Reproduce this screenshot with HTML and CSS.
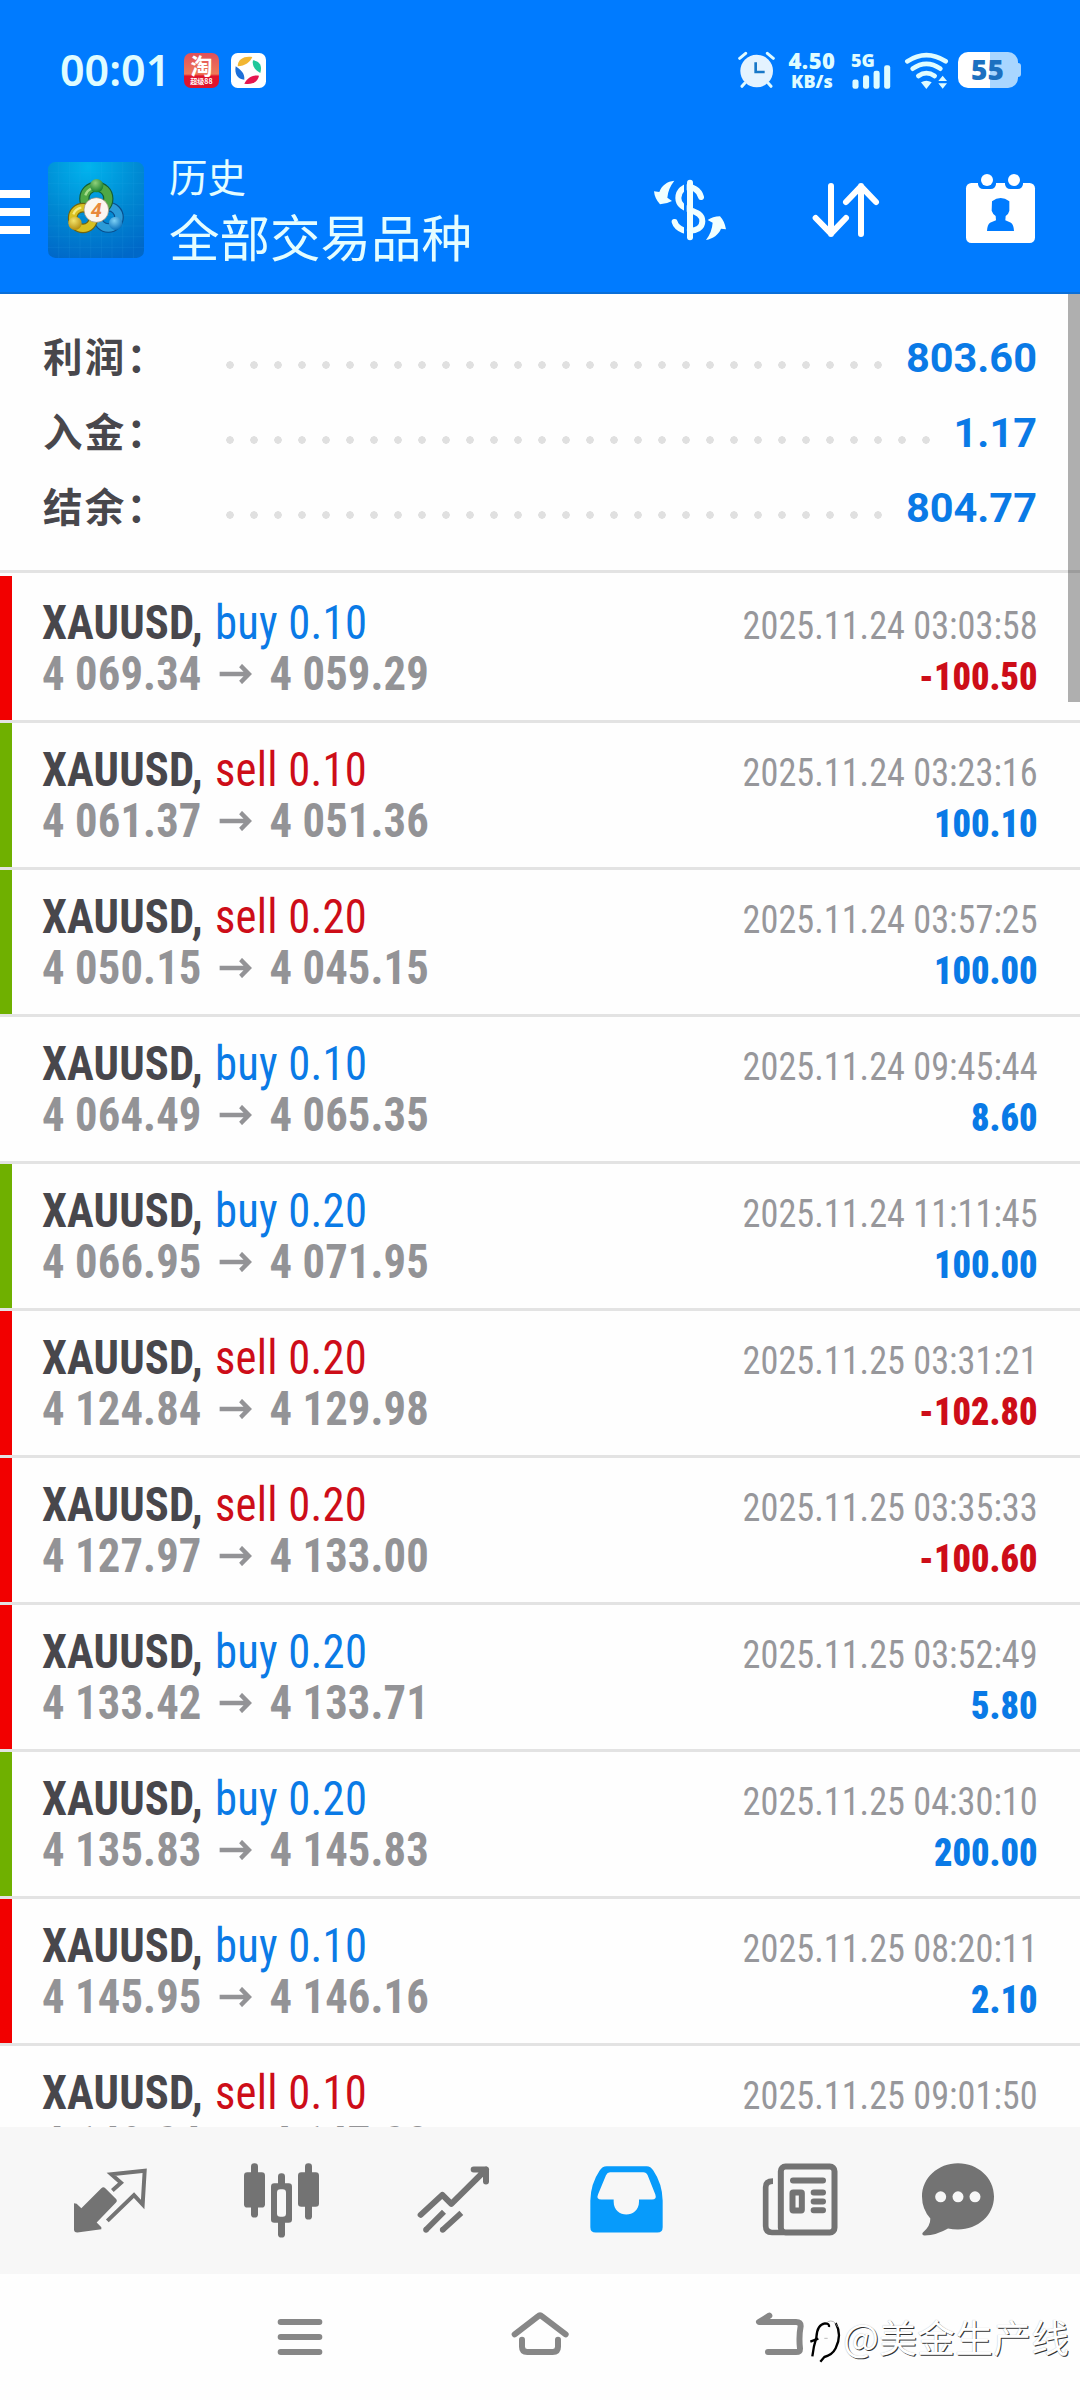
FILE: index.html
```
<!DOCTYPE html>
<html lang="zh-CN">
<head>
<meta charset="utf-8">
<title>历史</title>
<link rel="stylesheet" href="styles.css">
</head>
<body>
<div class="screen">
  <header class="top">
    <div class="status">
      <span class="clock">00:01</span>
      <span class="app-chip">
        <span class="chip-main">淘</span>
        <span class="chip-sub">超级88</span>
      </span>
      <svg class="chip" viewBox="0 0 105 105">
        <rect width="105" height="105" rx="20" fill="#fff"/>
        <path d="M20 40C20 18 40 8 64 12C58 26 42 40 20 40Z" fill="#f2b632"/>
        <path d="M66 22C86 24 94 38 88 60C74 52 62 40 66 22Z" fill="#1fc79a"/>
        <path d="M84 68C80 88 62 96 40 92C48 76 62 64 84 68Z" fill="#e5174f"/>
        <path d="M14 40C28 50 42 60 40 80C20 80 10 62 14 40Z" fill="#1d6fd8"/>
      </svg>
      <span class="spacer"></span>
      <svg class="alarm" viewBox="54 66 111 114" width="37" height="38">
        <g stroke="#dffaff" stroke-width="9" stroke-linecap="round" fill="none">
          <path d="M59 88L77 73M160 88L142 73M74 163L66 172M145 163L153 172"/>
        </g>
        <circle cx="110" cy="126" r="49" fill="#e4f3ff"/>
        <path d="M107 100V129H134" fill="none" stroke="#1878c8" stroke-width="8"/>
      </svg>
      <span class="speed"><b>4.50</b><b class="unit">KB/s</b></span>
      <span class="signal">
        <b>5G</b>
        <svg viewBox="397 106 123 75" width="41" height="25">
          <g fill="#dffcff"><rect x="399" y="151" width="19" height="29" rx="7"/><rect x="432" y="138" width="19" height="42" rx="7"/><rect x="465" y="124" width="19" height="56" rx="7"/><rect x="498" y="107" width="19" height="73" rx="7"/></g>
        </svg>
      </span>
      <svg class="wifi" viewBox="549 66 135 117" width="45" height="39">
        <g fill="none" stroke="#dffcff" stroke-width="14" stroke-linecap="round">
          <path d="M559 97Q616 60 674 97"/><path d="M575 119Q616 90 658 119"/><path d="M592 141Q616 124 641 141"/>
        </g>
        <path d="M600 160Q616 151 632 160L616 180Z" fill="#dffcff"/>
        <path d="M652 156L665 140L678 156ZM652 163L665 179L678 163Z" fill="#dffcff"/>
      </svg>
      <span class="battery"><b>55</b></span>
    </div>
    <div class="bar">
      <span class="menu"><i></i><i></i><i></i></span>
      <svg class="logo" viewBox="144 396 288 288">
        <defs>
          <radialGradient id="lg" cx="42%" cy="5%" r="100%"><stop offset="0" stop-color="#00b4ee"/><stop offset=".55" stop-color="#0088d2"/><stop offset="1" stop-color="#0068c8"/></radialGradient>
          <radialGradient id="gn" cx="40%" cy="30%" r="70%"><stop offset="0" stop-color="#8fd07a"/><stop offset="1" stop-color="#187f2e"/></radialGradient>
          <radialGradient id="yl" cx="40%" cy="30%" r="70%"><stop offset="0" stop-color="#f3e36a"/><stop offset="1" stop-color="#b68f10"/></radialGradient>
          <radialGradient id="bl" cx="40%" cy="30%" r="70%"><stop offset="0" stop-color="#7dd0f5"/><stop offset="1" stop-color="#0b72bd"/></radialGradient>
        </defs>
        <rect x="144" y="396" width="288" height="288" rx="22" fill="url(#lg)"/>
        <path d="M176 396V684M208 396V684M240 396V684M272 396V684M304 396V684M336 396V684M368 396V684M400 396V684M144 428H432M144 460H432M144 492H432M144 524H432M144 556H432M144 588H432M144 620H432M144 652H432" stroke="#3fb4ee" stroke-opacity=".18" stroke-width="2"/>
        <circle cx="325" cy="562" r="32" fill="none" stroke="#0a4f8d" stroke-width="29"/>
        <circle cx="325" cy="562" r="32" fill="none" stroke="#2b9bd8" stroke-width="22"/>
        <circle cx="289" cy="506" r="36" fill="none" stroke="#155f35" stroke-width="31"/>
        <circle cx="289" cy="506" r="36" fill="none" stroke="#4fa845" stroke-width="24"/>
        <path d="M256 496A36 36 0 0 1 300 473" fill="none" stroke="#a6dc8a" stroke-width="7"/>
        <circle cx="249" cy="564" r="31" fill="none" stroke="#6f6410" stroke-width="29"/>
        <circle cx="249" cy="564" r="31" fill="none" stroke="#d8c022" stroke-width="22"/>
        <path d="M220 553A31 31 0 0 1 244 533" fill="none" stroke="#f5ec80" stroke-width="7"/>
        <circle cx="290" cy="467" r="20" fill="url(#gn)"/>
        <circle cx="225" cy="580" r="20" fill="url(#yl)"/>
        <circle cx="347" cy="580" r="20" fill="url(#bl)"/>
        <circle cx="289" cy="540" r="37" fill="#fbf6f0" stroke="#9a8a70" stroke-width="2"/>
        <text class="logo-num" x="289" y="562" text-anchor="middle">4</text>
      </svg>
      <div class="titles"><span class="small">历史</span><span class="large">全部交易品种</span></div>
      <svg class="action" viewBox="15 45 270 270">
        <g fill="#f0ffff"><path d="M103 92C82 94 65 106 58 126L42 124Q44 146 60 163Q80 162 96 153L82 143Q84 116 103 92Z"/>
        <path d="M198 270C219 266 236 254 243 236L258 238Q254 214 240 199Q218 200 203 210L218 218Q216 246 198 270Z"/></g>
        <path d="M183 141C176 116 154 112 150 112C132 108 115 122 115 144C115 166 134 174 150 180C172 188 187 194 187 214C187 234 168 242 150 242M104 216C108 230 118 236 130 241" fill="none" stroke="#f0ffff" stroke-width="18" stroke-linecap="round"/>
        <path d="M136 98V262" stroke="#007bff" stroke-width="8"/>
        <path d="M150 98V262" stroke="#f0ffff" stroke-width="18" stroke-linecap="round"/>
      </svg>
      <svg class="action" viewBox="243 405 270 270">
        <g fill="none" stroke="#fff" stroke-width="18" stroke-linecap="round" stroke-linejoin="round"><path d="M333 468V612M287 564L333 611L378 564"/><path d="M423 612V468M378 516L423 469L468 516"/></g>
      </svg>
      <svg class="action" viewBox="711 405 270 270">
        <rect x="738" y="459" width="207" height="180" rx="16" fill="#fff"/>
        <path d="M774 455V463Q776 477 790 477H812Q826 477 828 463V455ZM855 455V463Q857 477 871 477H893Q907 477 909 463V455Z" fill="#007bff"/>
        <circle cx="801" cy="450" r="18" fill="#fff"/><circle cx="882" cy="450" r="18" fill="#fff"/>
        <path d="M816 514Q842 494 868 514V542Q866 552 857 558L856 571L873 578Q881 583 882 603H801Q802 583 810 578L828 571L827 558Q818 552 815 542Z" fill="#007bff"/>
      </svg>
    </div>
  </header>

  <main class="list">
    <section class="summary">
      <div class="sum"><span>利润：</span><i></i><b>803.60</b></div>
      <div class="sum"><span>入金：</span><i></i><b>1.17</b></div>
      <div class="sum"><span>结余：</span><i></i><b>804.77</b></div>
    </section>

    <article class="deal loss"><div class="line"><span class="sym">XAUUSD,</span><span class="buy">buy 0.10</span><time>2025.11.24 03:03:58</time></div><div class="line price"><span>4 069.34</span><svg class="arrow" viewBox="0 0 35 20"><use href="#arr"/></svg><span>4 059.29</span><b class="neg">-100.50</b></div></article>
    <article class="deal gain"><div class="line"><span class="sym">XAUUSD,</span><span class="sell">sell 0.10</span><time>2025.11.24 03:23:16</time></div><div class="line price"><span>4 061.37</span><svg class="arrow" viewBox="0 0 35 20"><use href="#arr"/></svg><span>4 051.36</span><b class="pos">100.10</b></div></article>
    <article class="deal gain"><div class="line"><span class="sym">XAUUSD,</span><span class="sell">sell 0.20</span><time>2025.11.24 03:57:25</time></div><div class="line price"><span>4 050.15</span><svg class="arrow" viewBox="0 0 35 20"><use href="#arr"/></svg><span>4 045.15</span><b class="pos">100.00</b></div></article>
    <article class="deal"><div class="line"><span class="sym">XAUUSD,</span><span class="buy">buy 0.10</span><time>2025.11.24 09:45:44</time></div><div class="line price"><span>4 064.49</span><svg class="arrow" viewBox="0 0 35 20"><use href="#arr"/></svg><span>4 065.35</span><b class="pos">8.60</b></div></article>
    <article class="deal gain"><div class="line"><span class="sym">XAUUSD,</span><span class="buy">buy 0.20</span><time>2025.11.24 11:11:45</time></div><div class="line price"><span>4 066.95</span><svg class="arrow" viewBox="0 0 35 20"><use href="#arr"/></svg><span>4 071.95</span><b class="pos">100.00</b></div></article>
    <article class="deal loss"><div class="line"><span class="sym">XAUUSD,</span><span class="sell">sell 0.20</span><time>2025.11.25 03:31:21</time></div><div class="line price"><span>4 124.84</span><svg class="arrow" viewBox="0 0 35 20"><use href="#arr"/></svg><span>4 129.98</span><b class="neg">-102.80</b></div></article>
    <article class="deal loss"><div class="line"><span class="sym">XAUUSD,</span><span class="sell">sell 0.20</span><time>2025.11.25 03:35:33</time></div><div class="line price"><span>4 127.97</span><svg class="arrow" viewBox="0 0 35 20"><use href="#arr"/></svg><span>4 133.00</span><b class="neg">-100.60</b></div></article>
    <article class="deal loss"><div class="line"><span class="sym">XAUUSD,</span><span class="buy">buy 0.20</span><time>2025.11.25 03:52:49</time></div><div class="line price"><span>4 133.42</span><svg class="arrow" viewBox="0 0 35 20"><use href="#arr"/></svg><span>4 133.71</span><b class="pos">5.80</b></div></article>
    <article class="deal gain"><div class="line"><span class="sym">XAUUSD,</span><span class="buy">buy 0.20</span><time>2025.11.25 04:30:10</time></div><div class="line price"><span>4 135.83</span><svg class="arrow" viewBox="0 0 35 20"><use href="#arr"/></svg><span>4 145.83</span><b class="pos">200.00</b></div></article>
    <article class="deal loss"><div class="line"><span class="sym">XAUUSD,</span><span class="buy">buy 0.10</span><time>2025.11.25 08:20:11</time></div><div class="line price"><span>4 145.95</span><svg class="arrow" viewBox="0 0 35 20"><use href="#arr"/></svg><span>4 146.16</span><b class="pos">2.10</b></div></article>
    <article class="deal"><div class="line"><span class="sym">XAUUSD,</span><span class="sell">sell 0.10</span><time>2025.11.25 09:01:50</time></div><div class="line price"><span>4 149.24</span><svg class="arrow" viewBox="0 0 35 20"><use href="#arr"/></svg><span>4 147.28</span></div></article>
    <span class="scrollbar"></span>
  </main>

  <nav class="tabs">
    <svg viewBox="204 355.5 252 252">
      <path d="M304 443Q310 438 316 443L349 476Q353 481 348 486L290 546L304 560V566L232 576Q222 576 222 567V488L230 490L244 503Z" fill="#737373"/>
      <path d="M337 450L363 427L334 401L434 391L428 492L402 464L322 541" fill="none" stroke="#737373" stroke-width="12"/>
    </svg>
    <svg viewBox="720 355.5 252 252">
      <g fill="#737373"><rect x="732" y="395" width="63" height="106" rx="10"/><rect x="753" y="368" width="21" height="163" rx="10"/><rect x="894" y="395" width="63" height="104" rx="10"/><rect x="915" y="368" width="21" height="169" rx="10"/><rect x="813" y="428" width="63" height="119" rx="10"/><rect x="834" y="398" width="21" height="193" rx="10"/></g>
      <rect x="831" y="446" width="27" height="83" rx="10" fill="#f7f7f7"/>
    </svg>
    <svg viewBox="96 355.5 252 252">
      <g fill="none" stroke="#737373" stroke-width="18" stroke-linecap="round" stroke-linejoin="round"><path d="M122 523L187 463L214 490L318 387M281 387H318V423"/></g>
      <path d="M138 568L192 514M188 568L244 517" stroke="#737373" stroke-width="17"/>
      <circle cx="138" cy="568" r="8.500" fill="#737373"/><circle cx="188" cy="568" r="8.500" fill="#737373"/>
    </svg>
    <svg viewBox="612 355.5 252 252">
      <path fill-rule="evenodd" fill="#079bfb" d="M680 377H800Q812 377 820 390Q847 430 848 480V560Q848 576 832 576H647Q631 576 631 560V480Q632 430 659 390Q667 377 680 377ZM690 395Q682 395 678 404L654 462Q648 477 664 477H701V484C701 535 777 535 777 484V477H816Q831 477 826 462L803 404Q799 395 790 395Z"/>
    </svg>
    <svg viewBox="168 355.5 252 252">
      <g fill="none" stroke="#737373"><rect x="242.500" y="378" width="161" height="198" rx="14" stroke-width="18"/><path d="M219 422Q197 422 197 440V556Q197 576 216 576H250" stroke-width="17"/><path d="M279 420H369M341 456H369M341 483H369M341 509H369" stroke-width="18" stroke-linecap="round"/><rect x="277.500" y="456" width="28" height="54" rx="2" stroke-width="18" stroke-linejoin="round"/></g>
    </svg>
    <svg viewBox="684 355.5 252 252">
      <path d="M774 368C834 368 882 412 882 468C882 524 834 567 774 567Q758 567 744 564Q710 584 674 585Q664 584 668 577Q692 556 691 534Q666 506 666 468C666 412 714 368 774 368Z" fill="#737373"/>
      <g fill="#f7f7f7"><circle cx="722" cy="469" r="16.500"/><circle cx="774" cy="469" r="16.500"/><circle cx="825" cy="469" r="16.500"/></g>
    </svg>
  </nav>

  <nav class="system">
    <svg viewBox="810 801 180 180"><path d="M842 846H958M842 891H958M842 936H958" stroke="#878787" stroke-width="18" stroke-linecap="round"/></svg>
    <svg viewBox="390 801 180 180"><g fill="none" stroke="#878787" stroke-width="18" stroke-linecap="round" stroke-linejoin="round"><path d="M404 883L474 829Q480 823 486 829L557 883"/><path d="M426 899V920Q426 936 442 936H518Q534 936 534 920V899"/></g></svg>
    <svg viewBox="150 801 180 180"><g fill="none" stroke="#878787" stroke-width="18" stroke-linecap="round" stroke-linejoin="round"><path d="M208 827L177 846H288Q302 846 302 858Q296 890 300 926Q300 936 288 936H204"/></g></svg>
    <div class="mark">
      <svg viewBox="325 840 105 135"><path d="M332 908L356 899" fill="none" stroke="#000" stroke-width="7"/><path d="M338 952Q342 920 350 896Q352 856 376 853Q390 853 388 864" fill="none" stroke="#000" stroke-width="7"/><path d="M408 852Q428 888 408 928Q398 948 374 954L362 968" fill="none" stroke="#000" stroke-width="7"/><path d="M384 848Q404 840 414 864M374 898H384" fill="none" stroke="#999" stroke-width="2"/></svg>
      <span>@美金生产线</span>
    </div>
  </nav>
</div>
<svg class="defs" width="0" height="0"><defs><path id="arr" d="M0 10H31M22.500 1.500L31.500 10L22.500 18.500" fill="none" stroke="#939396" stroke-width="4.500"/></defs></svg>
</body>
</html>
```
FILE: styles.css
```
* { box-sizing: border-box; }
body { margin: 0; background: #fefefe; font-family: Roboto, "Noto Sans CJK SC", sans-serif; }
.screen { width: 1080px; height: 2400px; display: flex; flex-direction: column; overflow: hidden; position: relative; }
.defs { position: absolute; }

.top { height: 294px; flex: none; background: #007bff; border-bottom: 2px solid #0a6fd8; }
.status { height: 142px; padding: 0 62px 2px 60px; display: flex; align-items: center; }
.clock { font: 600 43px/48px "Noto Sans", sans-serif; color: #dffcff; width: 124px; letter-spacing: 0; white-space: nowrap; }
.app-chip { width: 35px; height: 35px; border-radius: 7px; margin-right: 12px; background: linear-gradient(#e0505a, #ef7a58 60%, #e0142c 66%); color: #fff; display: flex; flex-direction: column; align-items: center; overflow: hidden; }
.chip-main { font: 700 22px/23px "Noto Sans CJK SC", sans-serif; }
.chip-sub { font: 700 7px/11px "Noto Sans CJK SC", sans-serif; }
.chip { width: 35px; height: 35px; }
.spacer { flex: 1; }
.alarm { margin-right: 13px; }
.speed { width: 48px; display: flex; flex-direction: column; align-items: center; color: #dffcff; margin-right: 15px; font: 700 22px/22px "Noto Sans", sans-serif; letter-spacing: 0.500px; }
.speed .unit { font-size: 18px; line-height: 20px; letter-spacing: 0; }
.signal { width: 42px; height: 38px; display: flex; flex-direction: column; color: #dffcff; margin-right: 11px; font: 700 18px/18px "Noto Sans", sans-serif; }
.signal svg { margin-top: -4px; }
.signal b { height: 18px; }
.wifi { margin-right: 9px; }
.battery { width: 60px; height: 36px; border-radius: 10px; background: linear-gradient(90deg, #fff 32px, #a9d6ff 32px); color: #1c70c0; font: 700 28px/35px "Noto Sans", sans-serif; padding-left: 13px; position: relative; }
.battery::after { content: ""; position: absolute; right: -3px; top: 11px; width: 4px; height: 14px; border-radius: 0 3px 3px 0; background: #a9d6ff; }

.bar { height: 136px; padding-right: 33px; display: flex; align-items: center; }
.menu { width: 30px; margin-top: 4px; display: flex; flex-direction: column; gap: 10px; }
.menu i { height: 8px; background: #fff; }
.logo { width: 96px; height: 96px; margin: 0 25px 0 18px; }
.logo-num { font: italic 700 60px Roboto, sans-serif; fill: #e8893c; }
.titles { flex: 1; display: flex; flex-direction: column; color: #e4fdff; font-family: "Noto Sans CJK SC", sans-serif; margin-top: -9px; }
.titles .small { font-size: 38.500px; line-height: 58px; }
.titles .large { font-size: 50.500px; line-height: 62px; }
.action { width: 90px; height: 90px; margin-left: 66px; }

.list { flex: none; height: 1833px; overflow: hidden; position: relative; }
.summary { height: 279px; padding: 24px 43px 0; border-bottom: 3px solid #e3e3e3; margin-bottom: 3px; }
.sum { height: 75px; display: flex; align-items: center; font-size: 42px; }
.sum span { width: 175px; font: 700 39.500px/72px "Noto Sans CJK SC", sans-serif; letter-spacing: 2.200px; color: #48474c; white-space: nowrap; margin-top: -2px; }
.sum i { flex: 1; height: 8px; margin: 18px 17px 0 0; background: radial-gradient(circle, #e0e0e0 3.500px, transparent 4px) 0 0 / 24px 8px; }
.sum b { color: #0a7ae6; line-height: 75px; font-size: 41.500px; padding-top: 3px; }

.deal { height: 147px; border-bottom: 3px solid #e3e3e3; padding: 21px 43px 0 42px; }
.loss { background: linear-gradient(#f20000, #f20000) 0 0 / 12px 144px no-repeat; }
.gain { background: linear-gradient(#6fb000, #6fb000) 0 0 / 12px 144px no-repeat; }
/* Narrow the condensed face a little further, across the full row width. */
.line { width: 107.600%; transform: scaleX(0.930); transform-origin: 0 0; height: 51px; display: flex; align-items: baseline; font: 400 48px/51px "Roboto Condensed", Roboto, sans-serif; white-space: nowrap; }
.sym { font-weight: 700; color: #48474c; width: 186px; letter-spacing: 0.150px; }
.buy, .sell { letter-spacing: 0.250px; }
.buy { color: #0a7ae6; }
.sell { color: #cd0d18; }
.line time, .line b { margin-left: auto; font-size: 39px; }
.line time { color: #97979b; }
.price { font-weight: 700; color: #939396; }
.price span { letter-spacing: 0.120px; }
.arrow { width: 37px; height: 20px; margin: 0 18px 0 18px; position: relative; top: -6px; }
.pos { color: #0a7ae6; }
.neg { color: #cd0d18; }
.scrollbar { position: absolute; right: 0; top: 0; width: 12px; height: 408px; background: rgba(0, 0, 0, 0.310); }

.tabs { height: 147px; flex: none; background: #f7f7f7; padding: 0 24px; display: grid; grid-template-columns: repeat(6, 172px); place-items: center; }
.tabs svg { width: 84px; height: 84px; overflow: visible; }
.system { flex: 1; padding: 0 180px; display: grid; grid-template-columns: repeat(3, 240px); place-items: center; position: relative; }
.system svg { width: 60px; height: 60px; }
.mark { position: absolute; left: 808px; top: 45px; display: flex; align-items: flex-start; }
.system .mark svg { width: 35px; height: 45px; }
.mark span { font: 400 38px/38px "Noto Sans CJK SC", sans-serif; color: #fff; text-shadow: 1px 1px 0 #333, 0 0 1px rgba(0, 0, 0, 0.300); white-space: nowrap; margin-top: -2px; }
```
